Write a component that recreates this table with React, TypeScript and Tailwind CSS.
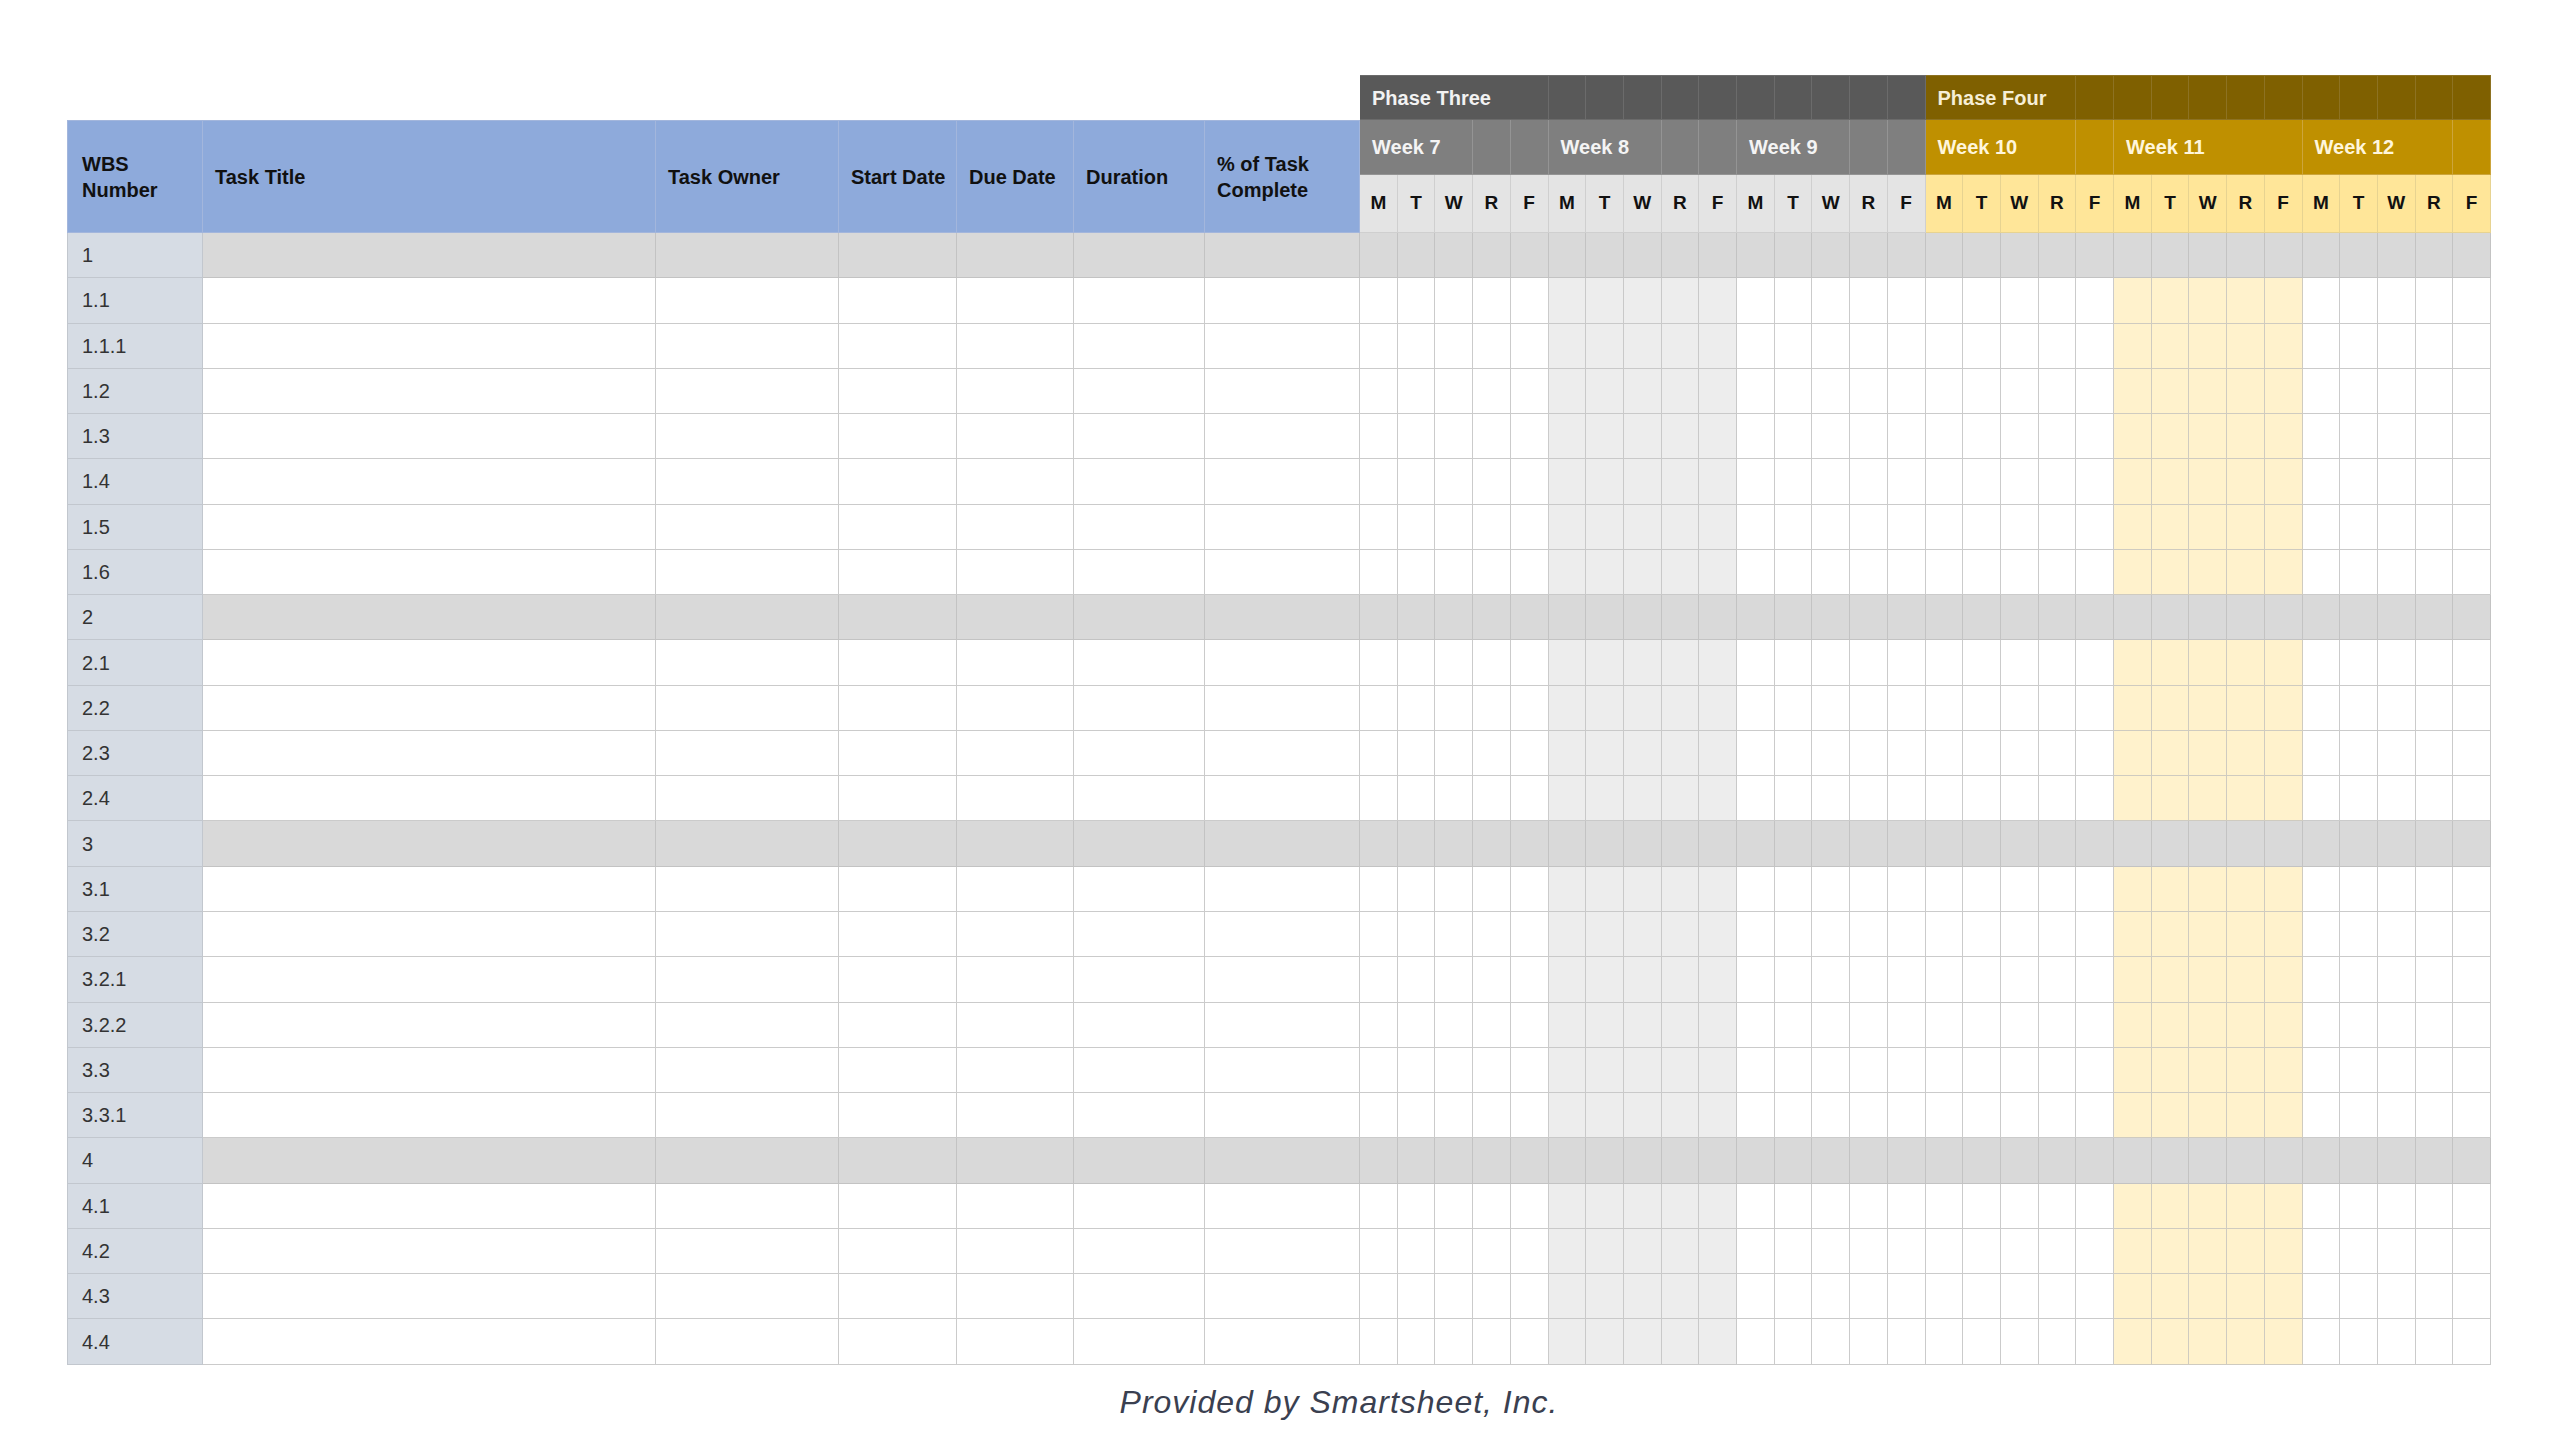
import React from 'react';

type Row = { id: string; section?: boolean };

const ROWS: Row[] = [
  { id: '1', section: true },
  { id: '1.1' },
  { id: '1.1.1' },
  { id: '1.2' },
  { id: '1.3' },
  { id: '1.4' },
  { id: '1.5' },
  { id: '1.6' },
  { id: '2', section: true },
  { id: '2.1' },
  { id: '2.2' },
  { id: '2.3' },
  { id: '2.4' },
  { id: '3', section: true },
  { id: '3.1' },
  { id: '3.2' },
  { id: '3.2.1' },
  { id: '3.2.2' },
  { id: '3.3' },
  { id: '3.3.1' },
  { id: '4', section: true },
  { id: '4.1' },
  { id: '4.2' },
  { id: '4.3' },
  { id: '4.4' },
];

const DAYS = ['M', 'T', 'W', 'R', 'F'];
const GANTT_COLS = Array.from({ length: 30 }, (_, i) => i);

// week label cells on the second header row: [label, column span]
const PHASE_THREE_WEEKS: [string, number][] = [
  ['Week 7', 3], ['', 1], ['', 1],
  ['Week 8', 3], ['', 1], ['', 1],
  ['Week 9', 3], ['', 1], ['', 1],
];
const PHASE_FOUR_WEEKS: [string, number][] = [
  ['Week 10', 4], ['', 1],
  ['Week 11', 5],
  ['Week 12', 4], ['', 1],
];

const spanClass: Record<number, string> = {
  1: 'col-span-1',
  3: 'col-span-3',
  4: 'col-span-4',
  5: 'col-span-5',
};

const HEADERS = ['Task Title', 'Task Owner', 'Start Date', 'Due Date', 'Duration'];

function ganttCellClass(col: number, section?: boolean) {
  if (section) return 'bg-[#d9d9d9] border-[#c3c3c3]';
  if (col >= 5 && col <= 9) return 'bg-[#ededed] border-[#c9c9c9]';
  if (col >= 20 && col <= 24) return 'bg-[#fff2cc] border-[#cfcbc0]';
  return 'bg-white border-[#cbcbcb]';
}

export default function App() {
  return (
    <div className="min-h-screen bg-white pl-[67px] pt-[75px] font-['Liberation_Sans',Arial,sans-serif]">
      <div className="grid w-[2424px] grid-cols-[136px_453px_183px_118px_117px_131px_155px_repeat(30,minmax(0,1fr))] grid-rows-[45px_55px_58px_repeat(25,45.28px)]">
        {/* Phase row */}
        <div className="col-span-7" />
        <div className="col-span-5 flex items-center border-t border-r border-b border-[#6b6b6b] bg-[#595959] pl-3 text-[20px] font-bold text-[#f2f2f2]">
          Phase Three
        </div>
        {Array.from({ length: 10 }).map((_, i) => (
          <div key={`p3-${i}`} className="border-t border-r border-b border-[#6b6b6b] bg-[#595959]" />
        ))}
        <div className="col-span-4 flex items-center border-t border-r border-b border-[#8d7222] bg-[#7f6000] pl-3 text-[20px] font-bold text-[#f6eed6]">
          Phase Four
        </div>
        {Array.from({ length: 11 }).map((_, i) => (
          <div key={`p4-${i}`} className="border-t border-r border-b border-[#8d7222] bg-[#7f6000]" />
        ))}

        {/* Column headers */}
        <div className="row-span-2 flex items-center border-t border-l border-r border-b border-[#a3b6dc] bg-[#8eaadb] pl-[14px] text-[20px] font-bold leading-[26px] text-[#111]">
          <span>
            WBS
            <br />
            Number
          </span>
        </div>
        {HEADERS.map((h) => (
          <div key={h} className="row-span-2 flex items-center border-t border-r border-b border-[#a3b6dc] bg-[#8eaadb] pl-3 text-[20px] font-bold text-[#111]">
            {h}
          </div>
        ))}
        <div className="row-span-2 flex items-center border-t border-r border-b border-[#a3b6dc] bg-[#8eaadb] pl-3 text-[20px] font-bold leading-[26px] text-[#111]">
          <span>
            % of Task
            <br />
            Complete
          </span>
        </div>

        {/* Week row */}
        {PHASE_THREE_WEEKS.map(([label, span], i) => (
          <div key={`w3-${i}`} className={`${spanClass[span]} flex items-center border-r border-b border-[#949494] bg-[#7f7f7f] pl-3 text-[20px] font-bold text-[#f4f4f4]`}>
            {label}
          </div>
        ))}
        {PHASE_FOUR_WEEKS.map(([label, span], i) => (
          <div key={`w4-${i}`} className={`${spanClass[span]} flex items-center border-r border-b border-[#cca53c] bg-[#bf9000] pl-3 text-[20px] font-bold text-[#fff6dc]`}>
            {label}
          </div>
        ))}

        {/* Day row */}
        {GANTT_COLS.map((c) => (
          <div
            key={`d-${c}`}
            className={`flex items-center justify-center border-r border-b text-[19px] font-bold text-[#111] ${c < 15 ? 'bg-[#e4e4e4] border-[#cfcfcf]' : 'bg-[#ffe699] border-[#e7d391]'}`}
          >
            {DAYS[c % 5]}
          </div>
        ))}

        {/* Data rows */}
        {ROWS.map((row) => (
          <React.Fragment key={row.id}>
            <div className="flex items-center border-l border-r border-b border-[#c2c7ce] bg-[#d6dce4] pl-[14px] text-[20px] text-[#333]">
              {row.id}
            </div>
            {Array.from({ length: 6 }).map((_, i) => (
              <div
                key={`${row.id}-c${i}`}
                className={`border-r border-b ${row.section ? 'bg-[#d9d9d9] border-[#c3c3c3]' : 'bg-white border-[#cbcbcb]'}`}
              />
            ))}
            {GANTT_COLS.map((c) => (
              <div key={`${row.id}-g${c}`} className={`border-r border-b ${ganttCellClass(c, row.section)}`} />
            ))}
          </React.Fragment>
        ))}
      </div>

      {/* Footer */}
      <div className="mt-[18px] flex w-[2424px] justify-center pl-[120px]">
        <p className="text-[32px] italic leading-[38px] tracking-[1px] text-[#3a4050]">Provided by Smartsheet, Inc.</p>
      </div>
    </div>
  );
}
